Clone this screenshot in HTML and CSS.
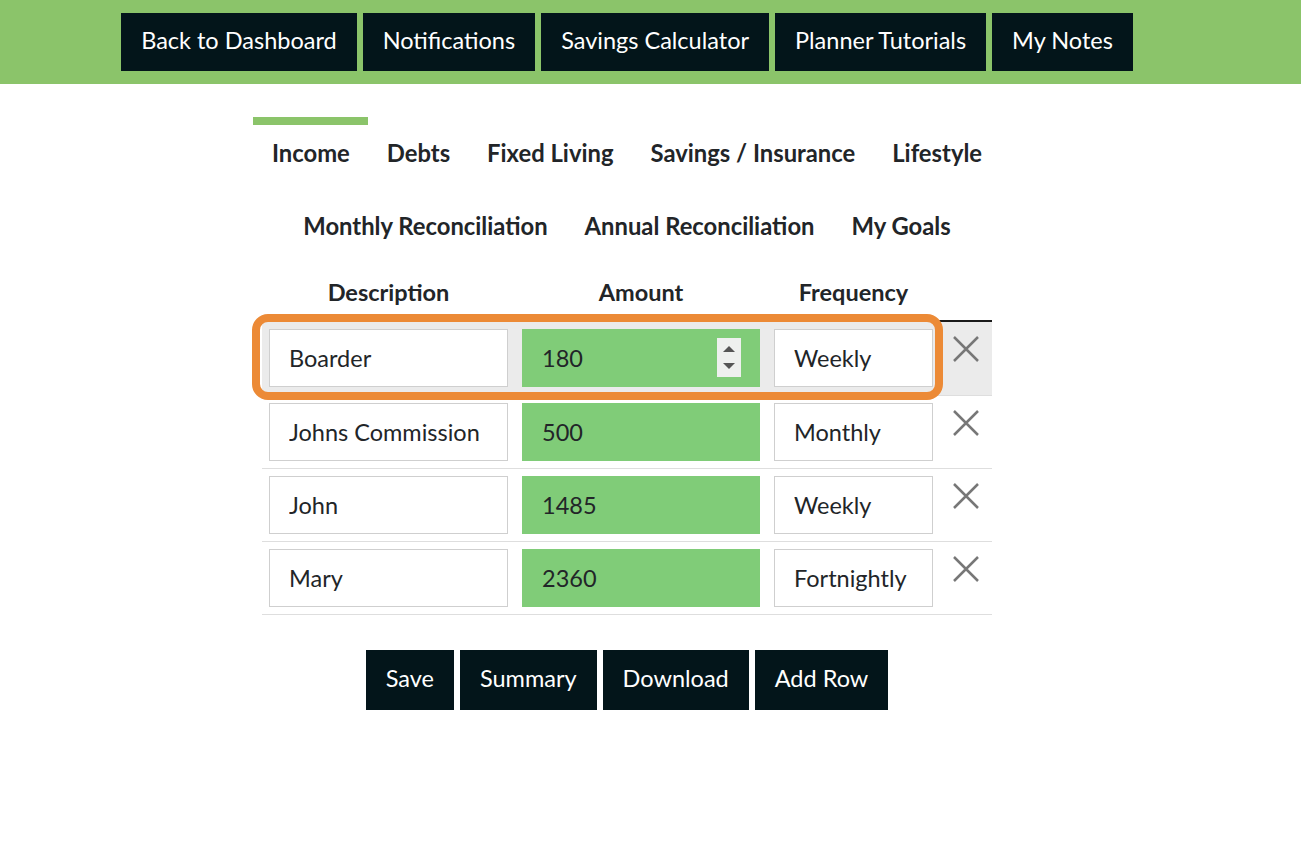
FILE: index.html
```html
<!DOCTYPE html>
<html lang="en">
<head>
  <meta charset="UTF-8" />
  <meta name="viewport" content="width=device-width, initial-scale=1.0"/>
  <title>Budget Planner - Income</title>
  <link rel="stylesheet" href="styles.css">
</head>
<body>
  <!-- Top bar -->
  <header class="top-bar">
    <nav class="top-nav">
      <button class="dark-btn">Back to Dashboard</button>
      <button class="dark-btn">Notifications</button>
      <button class="dark-btn">Savings Calculator</button>
      <button class="dark-btn">Planner Tutorials</button>
      <button class="dark-btn">My Notes</button>
    </nav>
  </header>

  <main class="page">
    <!-- Planner tabs -->
    <ul class="tabs">
      <li class="tab active">Income</li>
      <li class="tab">Debts</li>
      <li class="tab">Fixed Living</li>
      <li class="tab">Savings / Insurance</li>
      <li class="tab">Lifestyle</li>
    </ul>
    <ul class="tabs">
      <li class="tab">Monthly Reconciliation</li>
      <li class="tab">Annual Reconciliation</li>
      <li class="tab">My Goals</li>
    </ul>

    <!-- Income table -->
    <div class="table-wrap">
      <table class="income-table">
        <thead>
          <tr>
            <th class="col-desc">Description</th>
            <th class="col-amount">Amount</th>
            <th class="col-freq">Frequency</th>
            <th class="col-del"></th>
          </tr>
        </thead>
        <tbody>
          <tr class="hovered">
            <td><input class="field" type="text" value="Boarder"></td>
            <td>
              <div class="amount-box">
                <input class="field amount" type="text" value="180">
                <span class="spinner">
                  <svg width="14" height="39" viewBox="0 0 14 39"><path d="M7 8 L13 14 L1 14 Z" fill="#555"/><path d="M1 25 L13 25 L7 31 Z" fill="#555"/></svg>
                </span>
              </div>
            </td>
            <td><input class="field" type="text" value="Weekly"></td>
            <td class="del"><svg width="26" height="26" viewBox="0 0 26 26"><path d="M1 1 L25 25 M25 1 L1 25" stroke="#777" stroke-width="2.5"/></svg></td>
          </tr>
          <tr>
            <td><input class="field" type="text" value="Johns Commission"></td>
            <td><input class="field amount" type="text" value="500"></td>
            <td><input class="field" type="text" value="Monthly"></td>
            <td class="del"><svg width="26" height="26" viewBox="0 0 26 26"><path d="M1 1 L25 25 M25 1 L1 25" stroke="#777" stroke-width="2.5"/></svg></td>
          </tr>
          <tr>
            <td><input class="field" type="text" value="John"></td>
            <td><input class="field amount" type="text" value="1485"></td>
            <td><input class="field" type="text" value="Weekly"></td>
            <td class="del"><svg width="26" height="26" viewBox="0 0 26 26"><path d="M1 1 L25 25 M25 1 L1 25" stroke="#777" stroke-width="2.5"/></svg></td>
          </tr>
          <tr>
            <td><input class="field" type="text" value="Mary"></td>
            <td><input class="field amount" type="text" value="2360"></td>
            <td><input class="field" type="text" value="Fortnightly"></td>
            <td class="del"><svg width="26" height="26" viewBox="0 0 26 26"><path d="M1 1 L25 25 M25 1 L1 25" stroke="#777" stroke-width="2.5"/></svg></td>
          </tr>
        </tbody>
      </table>

      <!-- Orange highlight round the first row -->
      <div class="row-highlight"></div>
    </div>

    <div class="actions">
      <button class="dark-btn big">Save</button>
      <button class="dark-btn big">Summary</button>
      <button class="dark-btn big">Download</button>
      <button class="dark-btn big">Add Row</button>
    </div>
  </main>
</body>
</html>
```

FILE: styles.css
```css
body {
  margin: 0;
  padding: 0;
  background: #fff;
  font-family: Lato, "Open Sans", sans-serif;
  color: #222528;
}

/* Top green bar */
.top-bar {
  background: #8bc46a;
  padding: 13px 0;
}
.top-nav {
  width: 1254px;
  display: flex;
  justify-content: center;
  gap: 6px;
}

.dark-btn {
  background: #03151a;
  color: #fff;
  border: none;
  border-radius: 0;
  font-family: Lato, sans-serif;
  font-size: 23.5px;
  height: 58px;
  padding: 0 20px 5px;
  cursor: pointer;
}
.dark-btn.big {
  height: 60px;
  font-size: 23.5px;
}

/* Page body */
.page {
  width: 1254px;
  display: flex;
  flex-direction: column;
  align-items: center;
  padding-top: 33px;
}

.tabs {
  list-style: none;
  margin: 0;
  padding: 0;
  display: flex;
  justify-content: center;
}
.tab {
  border-top: 8px solid transparent;
  padding: 13px 18.5px 22px;
  font-size: 23.8px;
  font-weight: bold;
  line-height: 30px;
  cursor: pointer;
}
.tab.active {
  border-top-color: #8bc46a;
}

/* Table */
.table-wrap {
  position: relative;
  width: 730px;
}
.income-table {
  width: 100%;
  border-collapse: collapse;
  table-layout: fixed;
}
.income-table th {
  font-size: 23.5px;
  font-weight: bold;
  line-height: 30px;
  padding: 14px 0 13px;
  border-bottom: 2px solid #1a1a1a;
  text-align: center;
}
.col-desc { width: 253px; }
.col-amount { width: 252px; }
.col-freq { width: 173px; }
.col-del { width: 52px; }

.income-table td {
  padding: 7px;
  border-bottom: 1px solid #dedede;
  vertical-align: top;
}
.income-table tr.hovered td {
  background: #ebebeb;
  padding-bottom: 8px;
}

.field {
  box-sizing: border-box;
  width: 100%;
  height: 58px;
  border: 1px solid #cfcfcf;
  background: #fff;
  padding: 0 0 0 19px;
  font-family: Lato, sans-serif;
  font-size: 23.5px;
  color: #222528;
  outline: none;
}
.field.amount {
  background: #80cc78;
  border-color: #80cc78;
}

.amount-box {
  position: relative;
}
.spinner {
  position: absolute;
  top: 9px;
  right: 19px;
  width: 24px;
  height: 39px;
  background: #eef0ee;
  display: flex;
  align-items: center;
  justify-content: center;
}

.income-table td.del {
  padding: 14px 0 0;
  text-align: center;
}

.row-highlight {
  position: absolute;
  left: -10px;
  top: 51px;
  width: 675px;
  height: 70px;
  border: 8px solid #ec8a36;
  border-radius: 16px;
  pointer-events: none;
}

/* Bottom buttons */
.actions {
  display: flex;
  gap: 6px;
  margin-top: 35px;
}
```
